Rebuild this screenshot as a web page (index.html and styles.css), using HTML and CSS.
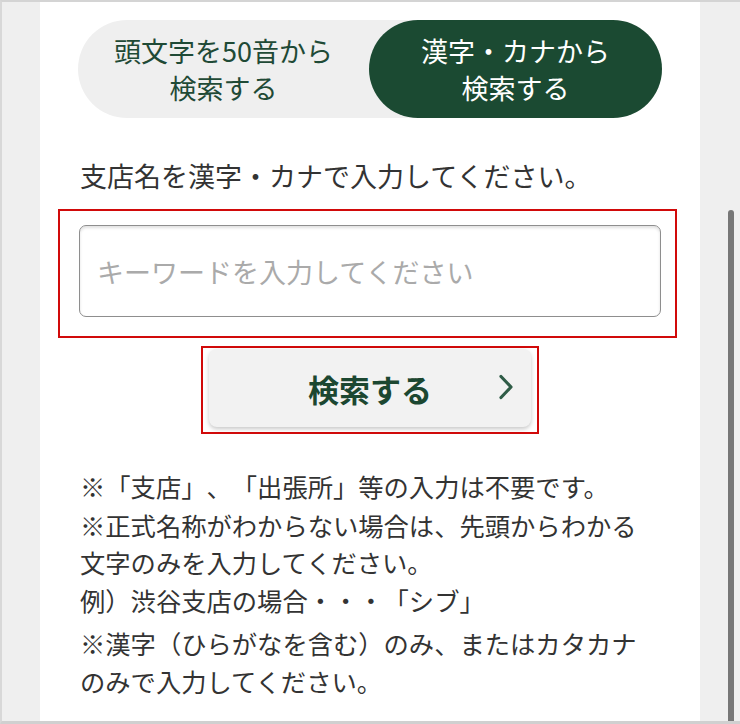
FILE: index.html
```html
<!DOCTYPE html>
<html lang="ja">
<head>
<meta charset="utf-8">
<title>支店検索</title>
<link rel="stylesheet" href="styles.css">
</head>
<body>
<div class="frame">
  <div class="gutter"></div>
  <main class="panel">
    <div class="toggle">
      <div class="toggle-opt">頭文字を50音から<br>検索する</div>
      <div class="toggle-opt is-active">漢字・カナから<br>検索する</div>
    </div>
    <p class="lead">支店名を漢字・カナで入力してください。</p>
    <div class="mark mark-input">
      <div class="input"><span class="placeholder">キーワードを入力してください</span></div>
    </div>
    <div class="mark mark-btn">
      <div class="btn">
        <span class="btn-label">検索する</span>
        <svg class="chev" width="16" height="26" viewBox="0 0 16 26"><polyline points="3,2.5 13,13 3,23.5" fill="none" stroke="#2f5c47" stroke-width="3.2" stroke-linecap="round" stroke-linejoin="round"/></svg>
      </div>
    </div>
    <div class="notes">
      <p class="note">※「支店」、「出張所」等の入力は不要です。</p>
      <p class="note">※正式名称がわからない場合は、先頭からわかる<br>文字のみを入力してください。<br>例）渋谷支店の場合・・・「シブ」</p>
      <p class="note">※漢字（ひらがなを含む）のみ、またはカタカナ<br>のみで入力してください。</p>
    </div>
  </main>
  <div class="sidebar"><div class="thumb"></div></div>
</div>
</body>
</html>
```

FILE: styles.css
```css
html, body {
  margin: 0;
  padding: 0;
  background: #efefef;
}
body {
  font-family: "Noto Sans CJK JP", "Noto Sans", sans-serif;
  color: #333;
  text-spacing-trim: space-all;
  font-feature-settings: normal;
}
.frame {
  width: 740px;
  height: 724px;
  box-sizing: border-box;
  border-top: 2px solid #d4d4d4;
  border-left: 2px solid #d8d8d8;
  border-bottom: 3px solid #d0d0d0;
  display: flex;
  overflow: hidden;
  background: #efefef;
}
.gutter {
  width: 38px;
  flex: none;
}
.panel {
  width: 660px;
  flex: none;
  background: #fff;
  display: flex;
  flex-direction: column;
}
.toggle {
  margin: 18px 38px 0;
  height: 98px;
  border-radius: 49px;
  background: #efefef;
  display: flex;
}
.toggle-opt {
  width: 291px;
  display: flex;
  align-items: center;
  justify-content: center;
  text-align: center;
  font-size: 27px;
  line-height: 37px;
  color: #1f4a36;
  border-radius: 49px;
}
.toggle-opt.is-active {
  width: 293px;
  background: #1b4a32;
  color: #fff;
}
.lead {
  margin: 39px 0 0 40px;
  font-size: 27px;
  line-height: 38px;
  color: #333;
}
.mark {
  border: 2px solid #d10a0a;
  box-sizing: border-box;
}
.mark-input {
  margin: 14px 0 0 18px;
  width: 619px;
  padding: 14px 14px 19px 19px;
}
.input {
  width: 582px;
  height: 92px;
  box-sizing: border-box;
  border: 1.5px solid #8e8e8e;
  border-radius: 7px;
  box-shadow: inset 0 2px 3px rgba(0,0,0,0.12);
  display: flex;
  align-items: center;
  padding-left: 17px;
}
.placeholder {
  font-size: 27px;
  color: #aaa;
}
.mark-btn {
  margin: 8px auto 0;
  width: 338px;
  height: 88px;
  padding-top: 1px;
  display: flex;
  justify-content: center;
  align-items: flex-start;
}
.btn {
  position: relative;
  width: 322px;
  height: 78px;
  border-radius: 8px;
  background: #f2f2f2;
  box-shadow: 0 2px 4px rgba(0,0,0,0.22);
  display: flex;
  align-items: center;
  justify-content: center;
}
.btn-label {
  font-size: 31px;
  font-weight: 700;
  color: #1c4731;
}
.chev {
  position: absolute;
  right: 17px;
  top: 25px;
}
.notes {
  margin: 34px 0 0 40px;
}
.note {
  margin: 0 0 1px;
  font-size: 25.3px;
  line-height: 37.5px;
  color: #333;
  white-space: nowrap;
}
.note + .note + .note {
  margin-top: 6px;
}
.sidebar {
  flex: 1;
  padding: 208px 0 0 28px;
  display: flex;
}
.thumb {
  width: 6px;
  background: #777;
  border-radius: 3px 3px 0 0;
}
```
